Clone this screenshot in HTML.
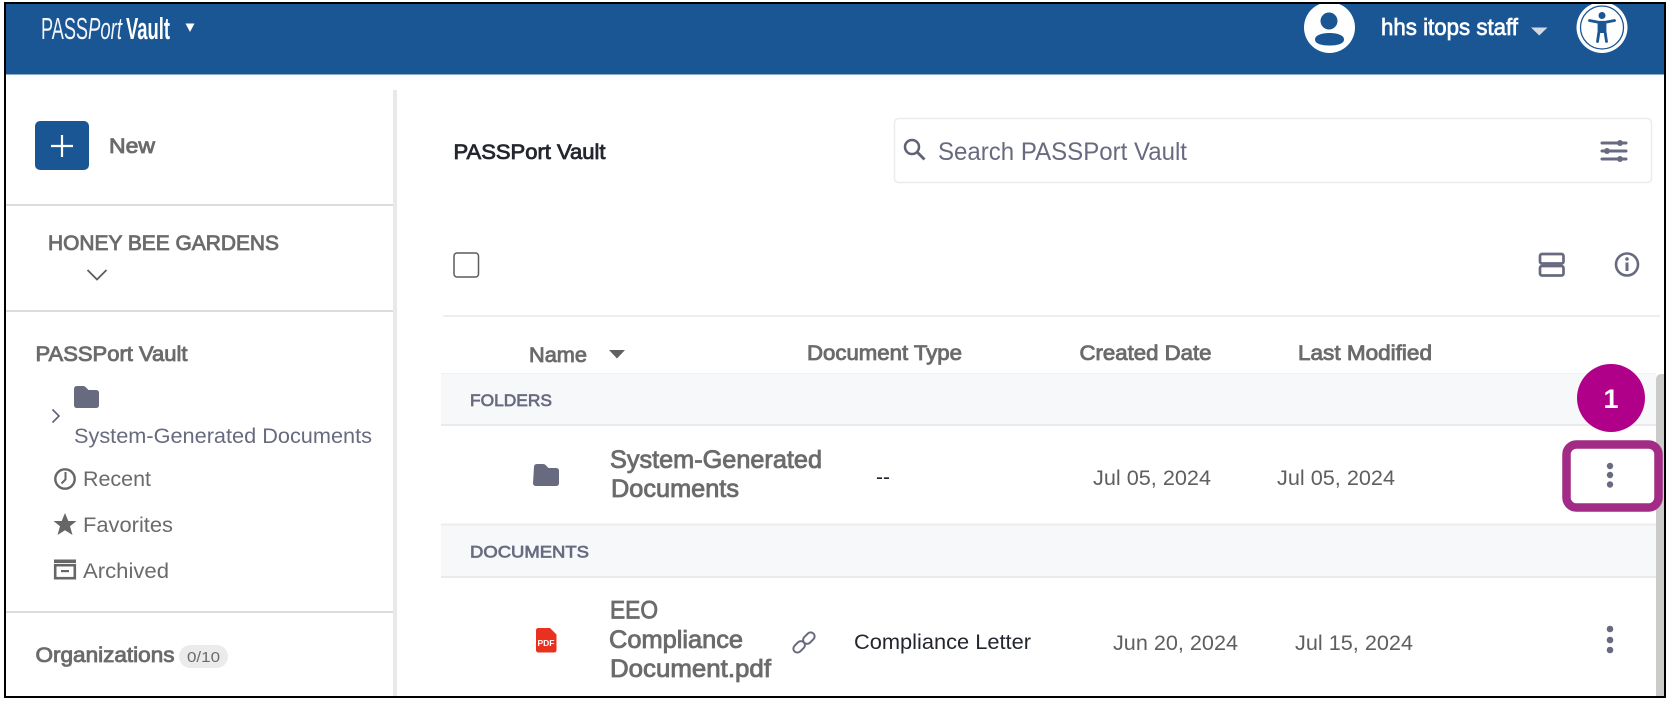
<!DOCTYPE html>
<html lang="en">
<head>
<meta charset="utf-8">
<title>PASSPort Vault</title>
<style>
html,body{margin:0;padding:0;background:#fff;width:1672px;height:705px;overflow:hidden}
svg{display:block;filter:blur(.35px)}
text{font-family:"Liberation Sans",sans-serif;white-space:pre}
.g{fill:#6b6b6b}
.s{fill:#686b80}
.d{fill:#23262e}
.m{fill:#5f5f5f}
.g.b{stroke:#6b6b6b;stroke-width:.85px}
.s.b{stroke:#686b80;stroke-width:.7px}
.d.b{stroke:#23262e;stroke-width:.8px}
.w.b{fill:#fff;stroke:#fff;stroke-width:.7px}
</style>
</head>
<body>
<svg width="1672" height="705" viewBox="0 0 1672 705" xmlns="http://www.w3.org/2000/svg">
<rect width="1672" height="705" fill="#fff"/>
<!-- header -->
<rect x="5" y="3" width="1660" height="71.500" fill="#1a5693"/>
<text x="41" y="39" font-size="31" fill="#f2f5f9" textLength="47" lengthAdjust="spacingAndGlyphs">PASS</text>
<text x="88" y="39" font-size="31" font-style="italic" fill="#f2f5f9" textLength="34" lengthAdjust="spacingAndGlyphs">Port</text>
<text x="126" y="39" font-size="31" font-weight="700" fill="#fff" textLength="44" lengthAdjust="spacingAndGlyphs">Vault</text>
<path d="M185.500 23.500h9l-4.500 8.500z" fill="#fff"/>
<circle cx="1329.500" cy="27.500" r="25.500" fill="#fff"/>
<circle cx="1329" cy="21" r="8.500" fill="#1a5693"/>
<path d="M1315 39.500c0-4.500 7-6.500 14.500-6.500s14.500 2 14.500 6.500-7 6-14.500 6-14.500-1.500-14.500-6z" fill="#1a5693"/>
<text x="1381" y="35" font-size="23" class="w b" textLength="137" lengthAdjust="spacingAndGlyphs">hhs itops staff</text>
<path d="M1531 27.500h16.500l-8.250 8z" fill="#d3d8e2"/>
<circle cx="1602" cy="27.500" r="25.500" fill="#fff"/>
<circle cx="1602" cy="27.500" r="21.500" fill="none" stroke="#1a5693" stroke-width="1.300"/>
<circle cx="1602" cy="15.500" r="3.500" fill="#1a5693"/>
<path d="M1589.500 20.500l9 1.800h7l9-1.800M1599 22.500v9l-1.500 10M1605 22.500v9l1.500 10" fill="none" stroke="#1a5693" stroke-width="2.800" stroke-linecap="round" stroke-linejoin="round"/>
<rect x="1598.500" y="23" width="7" height="10" fill="#1a5693"/>

<!-- sidebar -->
<rect x="393" y="90" width="4" height="607" fill="#e9e9e9"/>
<rect x="6" y="204" width="387" height="2" fill="#dcdcdc"/>
<rect x="6" y="310" width="387" height="2" fill="#dcdcdc"/>
<rect x="6" y="611" width="387" height="2" fill="#dcdcdc"/>
<rect x="35" y="121" width="54" height="49" rx="5" fill="#1a5693"/>
<path d="M51 146h22M62 135v22" stroke="#fff" stroke-width="2.200"/>
<text x="109" y="153" font-size="21" class="g b" textLength="46" lengthAdjust="spacingAndGlyphs">New</text>
<text x="48" y="250" font-size="21" class="g b" textLength="231" lengthAdjust="spacingAndGlyphs">HONEY BEE GARDENS</text>
<path d="M87.500 270l9.500 9.500 9.500-9.500" fill="none" stroke="#5d5d5d" stroke-width="1.800"/>
<text x="35.500" y="361" font-size="21" class="g b" textLength="152" lengthAdjust="spacingAndGlyphs">PASSPort Vault</text>
<path d="M74 389q0-3 3-3h6q2 0 3.500 2l2 2h7.500q3 0 3 3v12q0 3-3 3H77q-3 0-3-3z" fill="#686b80"/>
<path d="M52.500 409.500l6.500 6.500-6.500 6.500" fill="none" stroke="#5f6276" stroke-width="1.600"/>
<text x="74" y="443" font-size="21" class="s" textLength="298" lengthAdjust="spacingAndGlyphs">System-Generated Documents</text>
<circle cx="65" cy="479" r="9.700" fill="none" stroke="#666" stroke-width="2.400"/>
<path d="M65.500 472v7.500l-4 4" fill="none" stroke="#666" stroke-width="2"/>
<text x="83" y="486" font-size="21" class="g" textLength="68" lengthAdjust="spacingAndGlyphs">Recent</text>
<path d="M65 513l3.300 8h8.200l-6.500 5.300 2.500 8.700-7.500-4.800-7.500 4.800 2.500-8.700-6.500-5.300h8.200z" fill="#666"/>
<text x="83" y="532" font-size="21" class="g" textLength="90" lengthAdjust="spacingAndGlyphs">Favorites</text>
<rect x="54" y="559.500" width="22" height="3.500" fill="#666"/>
<rect x="55.200" y="565.200" width="19.600" height="13" fill="none" stroke="#666" stroke-width="2.600"/>
<rect x="61" y="570" width="8" height="2.200" fill="#666"/>
<text x="83" y="578" font-size="21" class="g" textLength="86" lengthAdjust="spacingAndGlyphs">Archived</text>
<text x="35.500" y="662" font-size="21" class="g b" textLength="139" lengthAdjust="spacingAndGlyphs">Organizations</text>
<rect x="179" y="645" width="49" height="23" rx="11.500" fill="#ebebeb"/>
<text x="187" y="662" font-size="15" class="g" textLength="33" lengthAdjust="spacingAndGlyphs">0/10</text>

<!-- main toolbar -->
<text x="453.500" y="159" font-size="21" class="d b" textLength="152" lengthAdjust="spacingAndGlyphs">PASSPort Vault</text>
<rect x="894.500" y="118.500" width="757" height="64" rx="4" fill="#fff" stroke="#ececec" stroke-width="1.500"/>
<circle cx="912" cy="147" r="7" fill="none" stroke="#5f6276" stroke-width="2.500"/>
<path d="M917.500 152.500l7 7" stroke="#5f6276" stroke-width="2.800"/>
<text x="938" y="160" font-size="25" class="s" textLength="249" lengthAdjust="spacingAndGlyphs">Search PASSPort Vault</text>
<path d="M1602 143h24M1602 151h24M1602 159h24" stroke="#686b80" stroke-width="3" stroke-linecap="round"/>
<circle cx="1620" cy="143" r="3" fill="#686b80"/>
<circle cx="1607" cy="151" r="3" fill="#686b80"/>
<circle cx="1620" cy="159" r="3" fill="#686b80"/>
<rect x="454" y="253" width="24.500" height="24" rx="3" fill="#fff" stroke="#5c5c5c" stroke-width="1.500"/>
<rect x="1540" y="254" width="23.500" height="9.500" rx="2" fill="none" stroke="#686b80" stroke-width="2.700"/>
<rect x="1540" y="266" width="23.500" height="9.500" rx="2" fill="none" stroke="#686b80" stroke-width="2.700"/>
<circle cx="1627" cy="264.500" r="11" fill="none" stroke="#686b80" stroke-width="2.600"/>
<circle cx="1627" cy="259" r="1.800" fill="#686b80"/>
<rect x="1625.500" y="262.500" width="3" height="8.500" fill="#686b80"/>
<rect x="443" y="315" width="1217" height="2" fill="#eeeeee"/>

<!-- table header -->
<text x="529" y="362" font-size="21" class="g b" textLength="58" lengthAdjust="spacingAndGlyphs">Name</text>
<path d="M609 350h16l-8 8.500z" fill="#616161"/>
<text x="807" y="360" font-size="21" class="g b" textLength="155" lengthAdjust="spacingAndGlyphs">Document Type</text>
<text x="1079.500" y="360" font-size="21" class="g b" textLength="132" lengthAdjust="spacingAndGlyphs">Created Date</text>
<text x="1298" y="360" font-size="21" class="g b" textLength="134" lengthAdjust="spacingAndGlyphs">Last Modified</text>

<!-- bands -->
<rect x="441" y="373" width="1215" height="52" fill="#f7f8fa"/>
<rect x="441" y="373" width="1215" height="1" fill="#eef0f2"/>
<rect x="441" y="424" width="1215" height="2" fill="#e9eaec"/>
<text x="470" y="406" font-size="17" class="s b" textLength="82" lengthAdjust="spacingAndGlyphs">FOLDERS</text>
<rect x="441" y="524" width="1215" height="53" fill="#f7f8fa"/>
<rect x="441" y="523.500" width="1215" height="2" fill="#ebecee"/>
<rect x="441" y="576" width="1215" height="2" fill="#e9eaec"/>
<text x="470" y="557.500" font-size="17" class="s b" textLength="119" lengthAdjust="spacingAndGlyphs">DOCUMENTS</text>

<!-- folder row -->
<path d="M534 467q0-3 3-3h6q2 0 3.500 2l2 2h7.500q3 0 3 3v12q0 3-3 3h-20q-3 0-3-3z" fill="#686b80"/>
<text x="610" y="468" font-size="25" class="g b" textLength="212" lengthAdjust="spacingAndGlyphs">System-Generated</text>
<text x="611" y="497" font-size="25" class="g b" textLength="128" lengthAdjust="spacingAndGlyphs">Documents</text>
<text x="876" y="484" font-size="21" class="d" textLength="14" lengthAdjust="spacingAndGlyphs">--</text>
<text x="1093" y="485" font-size="21" class="m" textLength="118" lengthAdjust="spacingAndGlyphs">Jul 05, 2024</text>
<text x="1277" y="485" font-size="21" class="m" textLength="118" lengthAdjust="spacingAndGlyphs">Jul 05, 2024</text>

<!-- document row -->
<path d="M538.500 628h11.500l6.500 6.500v15.500q0 2.500-2.500 2.500h-15.500q-2.500 0-2.500-2.500v-19.500q0-2.500 2.500-2.500z" fill="#e8311f"/>
<text x="537.500" y="646" font-size="8" font-weight="700" fill="#fff" textLength="17" lengthAdjust="spacingAndGlyphs">PDF</text>
<text x="610" y="618.500" font-size="25" class="g b" textLength="48" lengthAdjust="spacingAndGlyphs">EEO</text>
<text x="609" y="648" font-size="25" class="g b" textLength="134" lengthAdjust="spacingAndGlyphs">Compliance</text>
<text x="610" y="677" font-size="25" class="g b" textLength="161" lengthAdjust="spacingAndGlyphs">Document.pdf</text>
<g fill="none" stroke="#686b80" stroke-width="2">
<rect x="-7" y="-4" width="13" height="8" rx="4" transform="translate(799.500 646.500) rotate(-45)"/>
<rect x="-6" y="-4" width="13" height="8" rx="4" transform="translate(808.500 638.500) rotate(-45)"/>
</g>
<text x="854" y="649" font-size="21" class="d" textLength="177" lengthAdjust="spacingAndGlyphs">Compliance Letter</text>
<text x="1113" y="650" font-size="21" class="m" textLength="125" lengthAdjust="spacingAndGlyphs">Jun 20, 2024</text>
<text x="1295" y="650" font-size="21" class="m" textLength="118" lengthAdjust="spacingAndGlyphs">Jul 15, 2024</text>
<circle cx="1610" cy="629" r="3.300" fill="#686b80"/>
<circle cx="1610" cy="640" r="3.300" fill="#686b80"/>
<circle cx="1610" cy="650" r="3.300" fill="#686b80"/>

<!-- scrollbar -->
<path d="M1656 380q0-6 6-6h2v323h-8z" fill="#cbcbc9"/>

<!-- callout -->
<rect x="1566.500" y="444.500" width="92" height="63" rx="10" fill="#fff" stroke="#a22b85" stroke-width="8.500"/>
<circle cx="1610" cy="466" r="3.200" fill="#686b80"/>
<circle cx="1610" cy="475" r="3.200" fill="#686b80"/>
<circle cx="1610" cy="484.500" r="3.200" fill="#686b80"/>
<circle cx="1611" cy="398" r="34" fill="#b0008a"/>
<text x="1611" y="408" font-size="27" font-weight="700" fill="#fff" text-anchor="middle">1</text>

<!-- outer frame -->
<rect x="5" y="3" width="1660" height="694" fill="none" stroke="#000" stroke-width="2"/>
</svg>
</body>
</html>
